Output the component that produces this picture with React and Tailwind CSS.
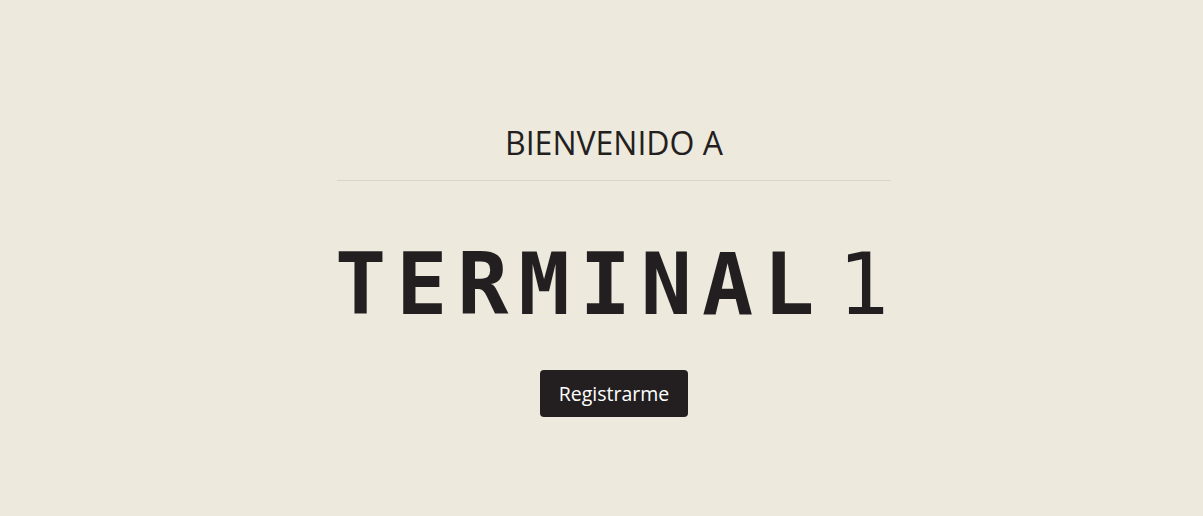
export default function App() {
  return (
    <div className="min-h-[516px] w-full bg-[#ede9dd] flex justify-center pl-[25px] pt-[127px]">
      <div className="flex flex-col items-center w-[554px]">
        <h2 className="text-[32px] leading-none font-normal text-[#231f20] font-['Open_Sans',sans-serif]">
          BIENVENIDO A
        </h2>
        <div className="w-full h-px bg-[#d9d5cb] mt-[21px]" />
        <h1 className="mt-[61px] self-stretch flex items-end justify-between pr-[2px] font-['DejaVu_Sans_Mono',monospace] text-[#231f20] leading-none">
          <span className="text-[85px] font-bold tracking-[10px] -ml-[2px]">TERMINAL</span>
          <span className="text-[85px] font-normal">1</span>
        </h1>
        <button className="mt-[43px] bg-[#231f20] text-white rounded-[4px] w-[148px] h-[47px] text-[19.5px] font-['Open_Sans',sans-serif]">
          Registrarme
        </button>
      </div>
    </div>
  );
}
